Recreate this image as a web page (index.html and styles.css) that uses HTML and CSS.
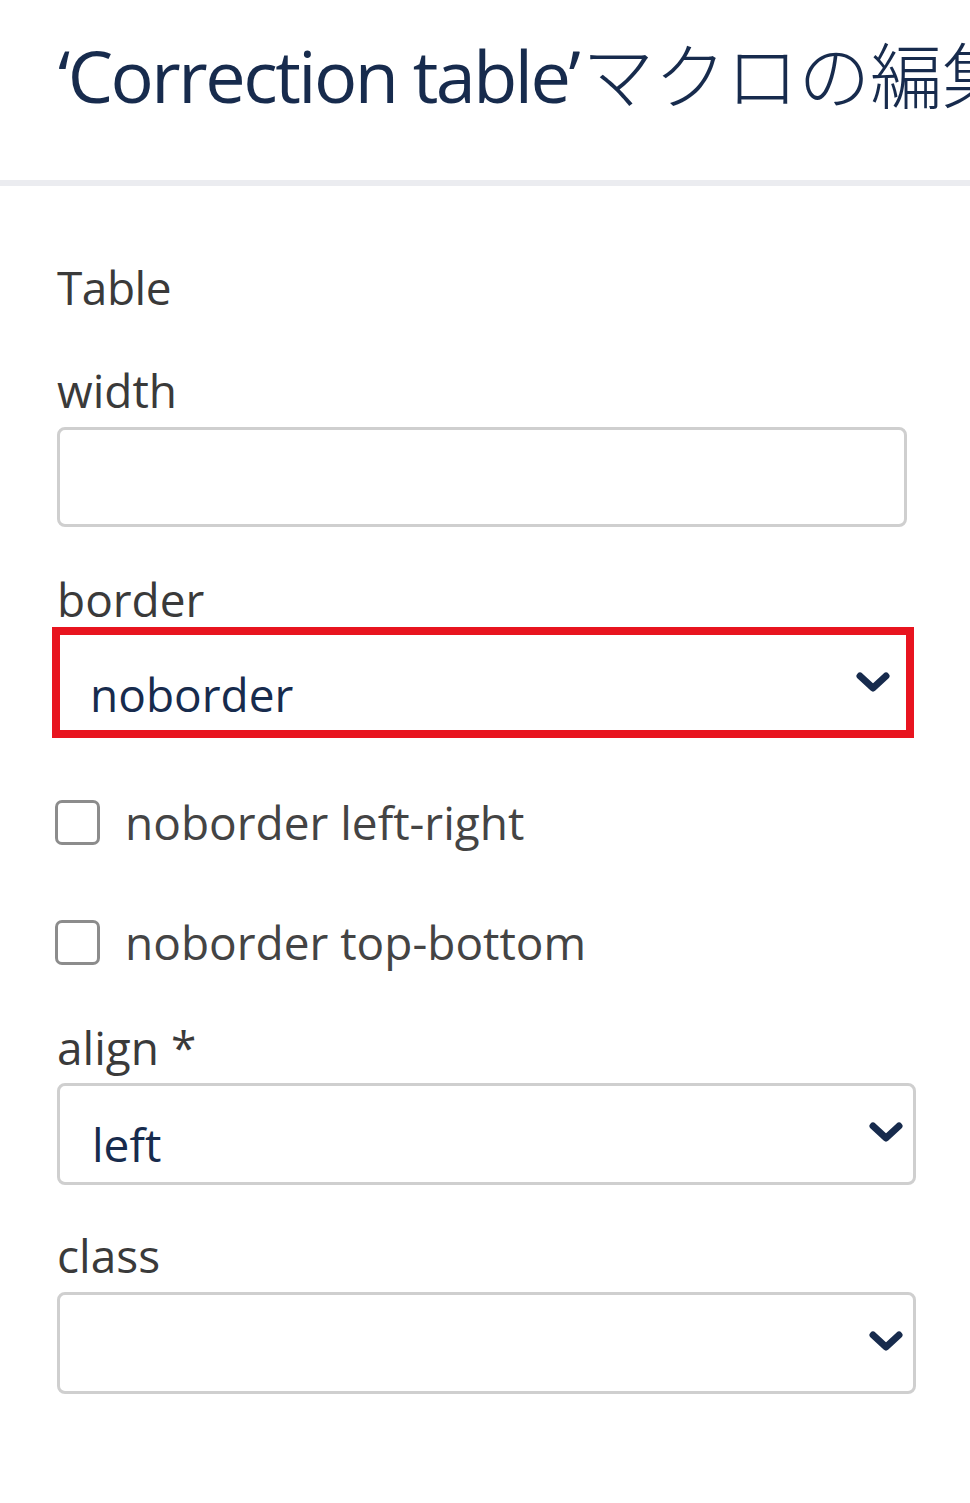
FILE: index.html
```html
<!DOCTYPE html>
<html lang="ja">
<head>
    <meta charset="UTF-8">
    <title>マクロの編集</title>
    <link rel="stylesheet" href="styles.css">
</head>
<body>
    <div class="header">
        <h1 class="title"><span class="title-latin">‘Correction table’</span>マクロの編集</h1>
    </div>

    <div class="form">
        <div class="section-title">Table</div>

        <!-- width -->
        <div class="label label-width">width</div>
        <div class="text-input"></div>

        <!-- border -->
        <div class="label label-border">border</div>
        <div class="select select-marked">
            <span class="select-value">noborder</span>
            <svg class="chevron" viewBox="0 0 34 22"><polyline points="4,4 17,16 30,4" /></svg>
        </div>

        <div class="check-row check-first">
            <span class="checkbox"></span>
            <span class="check-text">noborder left-right</span>
        </div>
        <div class="check-row check-second">
            <span class="checkbox"></span>
            <span class="check-text">noborder top-bottom</span>
        </div>

        <!-- align -->
        <div class="label label-align">align *</div>
        <div class="select">
            <span class="select-value">left</span>
            <svg class="chevron" viewBox="0 0 34 22"><polyline points="4,4 17,16 30,4" /></svg>
        </div>

        <!-- class -->
        <div class="label label-class">class</div>
        <div class="select">
            <span class="select-value"></span>
            <svg class="chevron" viewBox="0 0 34 22"><polyline points="4,4 17,16 30,4" /></svg>
        </div>
    </div>
</body>
</html>
```

FILE: styles.css
```css
* {
    margin: 0;
    padding: 0;
    box-sizing: border-box;
}

body {
    font-family: "Open Sans", "Noto Sans CJK JP", sans-serif;
    background: #fff;
    color: #3a3a3a;
}

.header {
    height: 186px;
    padding: 39px 0 0 58px;
    border-bottom: 6px solid #ebecf0;
    overflow: hidden;
}

.title {
    font-size: 72px;
    line-height: 72px;
    font-weight: 300;
    color: #172b4d;
    white-space: nowrap;
}

.title-latin {
    font-weight: 500;
    letter-spacing: -2.5px;
    margin-right: 4px;
}

.form {
    padding-left: 57px;
}

.section-title,
.label,
.check-text,
.select-value {
    font-size: 46px;
    line-height: 60px;
}

.section-title {
    margin-top: 71px;
    letter-spacing: -0.5px;
}

.label {
    margin-bottom: 7px;
}

.label-width {
    margin-top: 43px;
}

.label-border {
    margin-top: 42px;
    margin-bottom: -2px;
}

.label-align {
    margin-top: 45px;
    margin-bottom: 6px;
}

.label-class {
    margin-top: 40px;
}

.text-input {
    width: 850px;
    height: 100px;
    border: 3px solid #cfcfcf;
    border-radius: 8px;
}

.select {
    width: 859px;
    height: 102px;
    border: 3px solid #cfcfcf;
    border-radius: 8px;
    display: flex;
    justify-content: space-between;
    padding: 0 10px 8px 32px;
}

.select-value {
    align-self: flex-end;
    color: #172b4d;
    height: 60px;
}

.chevron {
    align-self: center;
    width: 34px;
    height: 22px;
    margin-bottom: -6px;
}

.chevron polyline {
    fill: none;
    stroke: #172b4d;
    stroke-width: 7;
    stroke-linecap: round;
    stroke-linejoin: round;
}

/* 红框标注 */
.select-marked {
    width: 862px;
    height: 111px;
    margin-left: -5px;
    border: 8px solid #e8141f;
    border-radius: 0;
    padding: 0 16px 6px 30px;
}

.check-row {
    display: flex;
    align-items: center;
    gap: 25px;
    height: 60px;
    margin-left: -2px;
}

.check-first {
    margin-top: 54px;
}

.check-second {
    margin-top: 60px;
}

.checkbox {
    width: 45px;
    height: 45px;
    border: 3px solid #8c8c8c;
    border-radius: 7px;
}

.check-text {
    color: #444;
}
```
